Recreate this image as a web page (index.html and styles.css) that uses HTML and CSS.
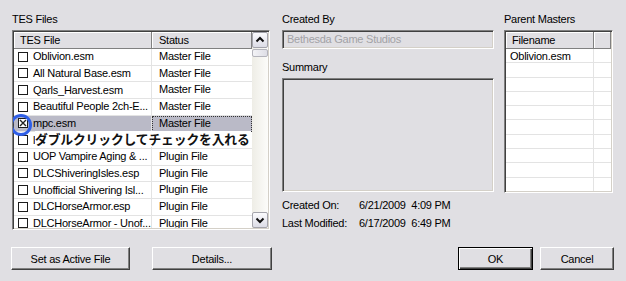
FILE: index.html
```html
<!DOCTYPE html>
<html lang="en">
<head>
  <meta charset="UTF-8">
  <title>Data Files</title>
  <link rel="stylesheet" href="styles.css">
</head>
<body>
  <div class="dialog">
    <div class="panes">

      <section class="pane pane-files">
        <div class="caption">TES Files</div>
        <div class="listview files">
          <div class="lv-body">
            <div class="lv-head">
              <div class="th th-name">TES File</div>
              <div class="th th-status">Status</div>
            </div>
            <div class="row"><div class="td td-name"><span class="check"></span>Oblivion.esm</div><div class="td td-status">Master File</div></div>
            <div class="row"><div class="td td-name"><span class="check"></span>All Natural Base.esm</div><div class="td td-status">Master File</div></div>
            <div class="row"><div class="td td-name"><span class="check"></span>Qarls_Harvest.esm</div><div class="td td-status">Master File</div></div>
            <div class="row"><div class="td td-name"><span class="check"></span>Beautiful People 2ch-E...</div><div class="td td-status">Master File</div></div>
            <div class="row selected"><div class="td td-name"><span class="check checked"><svg width="10" height="10" viewBox="0 0 10 10"><path d="M2 2 L8 8 M8 2 L2 8" stroke="#222" stroke-width="1.4"/></svg></span>mpc.esm</div><div class="td td-status">Master File</div></div>
            <div class="row"><div class="td td-name"><span class="check"></span>l</div><div class="td td-status"></div></div>
            <div class="row"><div class="td td-name"><span class="check"></span>UOP Vampire Aging &amp; ...</div><div class="td td-status">Plugin File</div></div>
            <div class="row"><div class="td td-name"><span class="check"></span>DLCShiveringIsles.esp</div><div class="td td-status">Plugin File</div></div>
            <div class="row"><div class="td td-name"><span class="check"></span>Unofficial Shivering Isl...</div><div class="td td-status">Plugin File</div></div>
            <div class="row"><div class="td td-name"><span class="check"></span>DLCHorseArmor.esp</div><div class="td td-status">Plugin File</div></div>
            <div class="row"><div class="td td-name"><span class="check"></span>DLCHorseArmor - Unof...</div><div class="td td-status">Plugin File</div></div>
          </div>
          <div class="scrollbar">
            <div class="sb-btn"><svg width="14" height="14" viewBox="0 0 14 14"><path d="M3.5 8.5 L7 5 L10.5 8.5" fill="none" stroke="#111" stroke-width="2"/></svg></div>
            <div class="sb-thumb"></div>
            <div class="sb-track"></div>
            <div class="sb-btn"><svg width="14" height="14" viewBox="0 0 14 14"><path d="M3.5 5.5 L7 9 L10.5 5.5" fill="none" stroke="#111" stroke-width="2"/></svg></div>
          </div>

          <svg class="mark" width="26" height="26" viewBox="0 0 26 26"><circle cx="13" cy="13" r="9.5" fill="none" stroke="#2f5fe8" stroke-width="3"/></svg>
          <div class="note">ダブルクリックしてチェックを入れる</div>
        </div>
      </section>

      <section class="pane pane-info">
        <div class="caption">Created By</div>
        <div class="field disabled">Bethesda Game Studios</div>
        <div class="caption caption-summary">Summary</div>
        <div class="field summary"></div>
        <div class="dates">
          <div class="date-row"><span class="date-label">Created On:</span><span class="date-value">6/21/2009  4:09 PM</span></div>
          <div class="date-row"><span class="date-label">Last Modified:</span><span class="date-value">6/17/2009  6:49 PM</span></div>
        </div>
      </section>

      <section class="pane pane-masters">
        <div class="caption">Parent Masters</div>
        <div class="listview masters">
          <div class="lv-body">
            <div class="lv-head">
              <div class="th th-file">Filename</div>
              <div class="th th-rest"></div>
            </div>
            <div class="mrow"><div class="td td-file">Oblivion.esm</div><div class="td td-rest"></div></div>
            <div class="mrow"><div class="td td-file"></div><div class="td td-rest"></div></div>
            <div class="mrow"><div class="td td-file"></div><div class="td td-rest"></div></div>
            <div class="mrow"><div class="td td-file"></div><div class="td td-rest"></div></div>
            <div class="mrow"><div class="td td-file"></div><div class="td td-rest"></div></div>
            <div class="mrow"><div class="td td-file"></div><div class="td td-rest"></div></div>
            <div class="mrow"><div class="td td-file"></div><div class="td td-rest"></div></div>
            <div class="mrow"><div class="td td-file"></div><div class="td td-rest"></div></div>
            <div class="mrow"><div class="td td-file"></div><div class="td td-rest"></div></div>
            <div class="mrow"><div class="td td-file"></div><div class="td td-rest"></div></div>
          </div>
        </div>
      </section>

    </div>

    <div class="buttons">
      <button class="btn btn-active">Set as Active File</button>
      <button class="btn btn-details">Details...</button>
      <div class="btn-group">
        <button class="btn btn-ok">OK</button>
        <button class="btn btn-cancel">Cancel</button>
      </div>
    </div>
  </div>
</body>
</html>
```

FILE: styles.css
```css
body {
  margin: 0;
  padding: 0;
  background-color: #e0dfe3;
  font-family: "Liberation Sans", Arial, sans-serif;
  font-size: 11px;
  letter-spacing: -0.25px;
  color: #000;
}

.dialog {
  width: 626px;
  height: 281px;
  overflow: hidden;
}

.panes {
  display: flex;
  align-items: flex-start;
  padding: 12px 0 0 12px;
}

.caption {
  height: 18px;
  line-height: 15px;
  white-space: nowrap;
}

/* sunken 3d frame */
.listview,
.field {
  box-sizing: border-box;
  border-top: 1px solid #808080;
  border-left: 1px solid #808080;
  border-right: 1px solid #ffffff;
  border-bottom: 1px solid #ffffff;
  box-shadow: inset 1px 1px 0 #404040, inset -1px -1px 0 #d4d0c8;
}

.listview {
  position: relative;
  display: flex;
  background: #ffffff;
  padding: 1px;
  overflow: hidden;
}

.lv-body {
  flex: 1;
  overflow: hidden;
}

.lv-head {
  display: flex;
  height: 17px;
}

.th {
  box-sizing: border-box;
  height: 17px;
  line-height: 16px;
  padding-left: 6px;
  background: #e0dfe3;
  border-right: 1px solid #808080;
  border-bottom: 1px solid #808080;
  box-shadow: inset 1px 1px 0 #ffffff;
  white-space: nowrap;
}

.td {
  box-sizing: border-box;
  white-space: nowrap;
  overflow: hidden;
}

/* TES files list */
.files {
  width: 258px;
  height: 200px;
}

.th-name { width: 138px; }
.th-status { width: 100px; padding-left: 7px; }

.row {
  display: flex;
  height: 16.67px;
}

.row .td {
  height: 16.67px;
  line-height: 15px;
  border-bottom: 1px solid #e3e3e3;
}

.td-name {
  width: 138px;
  display: flex;
  align-items: center;
  padding-left: 4px;
  border-right: 1px solid #e3e3e3;
}

.td-status {
  width: 100px;
  padding-left: 7px;
}

.row.selected .td {
  background: #babac7;
}

.row.selected .td-status {
  outline: 1px dotted #333;
  outline-offset: -1px;
}

.check {
  box-sizing: border-box;
  width: 10px;
  height: 10px;
  border: 1px solid #1c1c1c;
  background: #fff;
  margin-right: 5px;
  flex: none;
  position: relative;
}

.check svg {
  position: absolute;
  left: -1px;
  top: -1px;
}

.scrollbar {
  width: 16px;
  display: flex;
  flex-direction: column;
  background: linear-gradient(to right, #eeede6, #fcfcfa);
}

.sb-btn {
  box-sizing: border-box;
  width: 16px;
  height: 16px;
  border: 1px solid #a4a4ac;
  border-radius: 2px;
  background: linear-gradient(#fbfbfd, #dcdce6);
  display: flex;
  align-items: center;
  justify-content: center;
}

.sb-thumb {
  box-sizing: border-box;
  height: 8px;
  margin-top: 1px;
  border: 1px solid #b4b4bc;
  border-radius: 2px;
  background: linear-gradient(to right, #f3f3f6, #dedee6);
}

.sb-track {
  flex: 1;
}

.mark {
  position: absolute;
  left: -5px;
  top: 81px;
}

.note {
  position: absolute;
  left: 22px;
  top: 100.4px;
  width: 216px;
  height: 15.5px;
  background: #fff;
  font-family: "Noto Sans CJK JP", sans-serif;
  font-weight: bold;
  font-size: 12.8px;
  line-height: 15px;
  letter-spacing: -0.15px;
  white-space: nowrap;
  color: #111;
}

/* middle column */
.pane-info {
  width: 212px;
  margin-left: 12px;
}

.field {
  background: #e0dfe3;
}

.field.disabled {
  height: 19px;
  line-height: 16px;
  padding-left: 4px;
  color: #a2a2a6;
}

.caption-summary {
  margin-top: 11px;
}

.field.summary {
  height: 114px;
}

.dates {
  padding-top: 5px;
}

.date-row {
  display: flex;
  height: 18px;
  line-height: 16px;
}

.date-label {
  width: 77px;
}

.date-value {
  white-space: pre;
}

/* parent masters */
.pane-masters {
  margin-left: 10px;
}

.masters {
  width: 109px;
  height: 163px;
}

.th-file { width: 88px; }
.th-rest { flex: 1; padding: 0; }

.mrow {
  display: flex;
  height: 14.3px;
}

.mrow:first-of-type {
  height: 16px;
}

.mrow .td {
  height: 100%;
  line-height: 14px;
  border-bottom: 1px solid #e3e3e3;
}

.td-file {
  width: 88px;
  padding-left: 4px;
  border-right: 1px solid #e3e3e3;
}

.td-rest { flex: 1; }

/* buttons */
.buttons {
  display: flex;
  padding: 14px 12px 0 11px;
}

.btn {
  box-sizing: border-box;
  height: 23px;
  font-family: inherit;
  font-size: 11px;
  letter-spacing: inherit;
  color: #000;
  background: #e0dfe3;
  border-top: 1px solid #ffffff;
  border-left: 1px solid #ffffff;
  border-right: 1px solid #404040;
  border-bottom: 1px solid #404040;
  box-shadow: inset -1px -1px 0 #808080;
  padding: 0;
}

.btn-active { width: 119px; }
.btn-details { width: 120px; margin-left: 22px; }

.btn-group {
  display: flex;
  gap: 7px;
  margin-left: auto;
}

.btn-ok {
  width: 75px;
  border: 1px solid #000;
  box-shadow: inset 1px 1px 0 #ffffff, inset -1px -1px 0 #404040, inset -2px -2px 0 #808080;
}

.btn-cancel { width: 74px; }
```
